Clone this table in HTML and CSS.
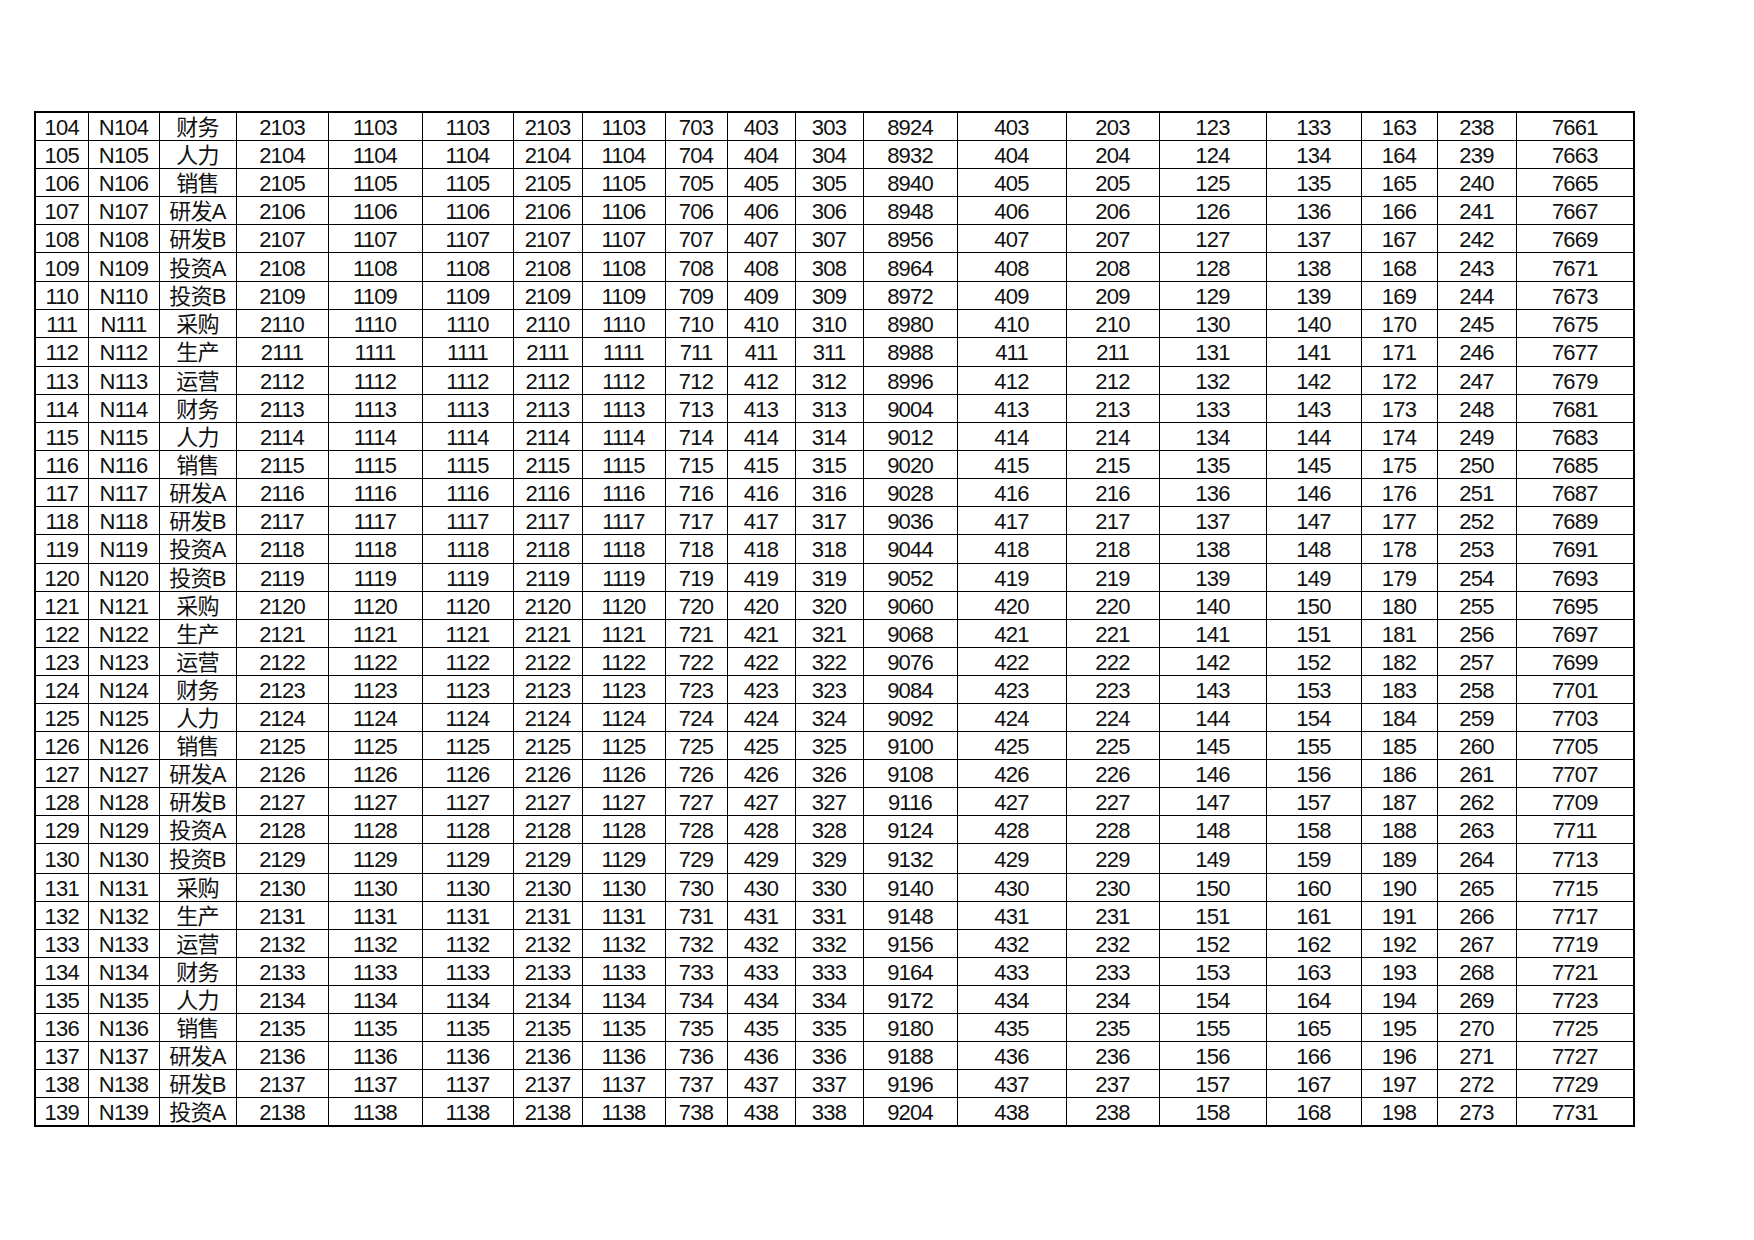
FILE: index.html
```html
<!DOCTYPE html>
<html lang="zh">
<head>
<meta charset="utf-8">
<title>表格</title>
<link rel="stylesheet" href="styles.css">
</head>
<body>
<div class="page">
<table class="grid">
<colgroup>
<col class="c1"><col class="c2"><col class="c3"><col class="c4"><col class="c5"><col class="c6"><col class="c7"><col class="c8"><col class="c9"><col class="c10"><col class="c11"><col class="c12"><col class="c13"><col class="c14"><col class="c15"><col class="c16"><col class="c17"><col class="c18"><col class="c19">
</colgroup>
<tbody>
<tr><td>104</td><td>N104</td><td>财务</td><td>2103</td><td>1103</td><td>1103</td><td>2103</td><td>1103</td><td>703</td><td>403</td><td>303</td><td>8924</td><td>403</td><td>203</td><td>123</td><td>133</td><td>163</td><td>238</td><td>7661</td></tr>
<tr><td>105</td><td>N105</td><td>人力</td><td>2104</td><td>1104</td><td>1104</td><td>2104</td><td>1104</td><td>704</td><td>404</td><td>304</td><td>8932</td><td>404</td><td>204</td><td>124</td><td>134</td><td>164</td><td>239</td><td>7663</td></tr>
<tr><td>106</td><td>N106</td><td>销售</td><td>2105</td><td>1105</td><td>1105</td><td>2105</td><td>1105</td><td>705</td><td>405</td><td>305</td><td>8940</td><td>405</td><td>205</td><td>125</td><td>135</td><td>165</td><td>240</td><td>7665</td></tr>
<tr><td>107</td><td>N107</td><td>研发A</td><td>2106</td><td>1106</td><td>1106</td><td>2106</td><td>1106</td><td>706</td><td>406</td><td>306</td><td>8948</td><td>406</td><td>206</td><td>126</td><td>136</td><td>166</td><td>241</td><td>7667</td></tr>
<tr><td>108</td><td>N108</td><td>研发B</td><td>2107</td><td>1107</td><td>1107</td><td>2107</td><td>1107</td><td>707</td><td>407</td><td>307</td><td>8956</td><td>407</td><td>207</td><td>127</td><td>137</td><td>167</td><td>242</td><td>7669</td></tr>
<tr><td>109</td><td>N109</td><td>投资A</td><td>2108</td><td>1108</td><td>1108</td><td>2108</td><td>1108</td><td>708</td><td>408</td><td>308</td><td>8964</td><td>408</td><td>208</td><td>128</td><td>138</td><td>168</td><td>243</td><td>7671</td></tr>
<tr><td>110</td><td>N110</td><td>投资B</td><td>2109</td><td>1109</td><td>1109</td><td>2109</td><td>1109</td><td>709</td><td>409</td><td>309</td><td>8972</td><td>409</td><td>209</td><td>129</td><td>139</td><td>169</td><td>244</td><td>7673</td></tr>
<tr><td>111</td><td>N111</td><td>采购</td><td>2110</td><td>1110</td><td>1110</td><td>2110</td><td>1110</td><td>710</td><td>410</td><td>310</td><td>8980</td><td>410</td><td>210</td><td>130</td><td>140</td><td>170</td><td>245</td><td>7675</td></tr>
<tr><td>112</td><td>N112</td><td>生产</td><td>2111</td><td>1111</td><td>1111</td><td>2111</td><td>1111</td><td>711</td><td>411</td><td>311</td><td>8988</td><td>411</td><td>211</td><td>131</td><td>141</td><td>171</td><td>246</td><td>7677</td></tr>
<tr><td>113</td><td>N113</td><td>运营</td><td>2112</td><td>1112</td><td>1112</td><td>2112</td><td>1112</td><td>712</td><td>412</td><td>312</td><td>8996</td><td>412</td><td>212</td><td>132</td><td>142</td><td>172</td><td>247</td><td>7679</td></tr>
<tr><td>114</td><td>N114</td><td>财务</td><td>2113</td><td>1113</td><td>1113</td><td>2113</td><td>1113</td><td>713</td><td>413</td><td>313</td><td>9004</td><td>413</td><td>213</td><td>133</td><td>143</td><td>173</td><td>248</td><td>7681</td></tr>
<tr><td>115</td><td>N115</td><td>人力</td><td>2114</td><td>1114</td><td>1114</td><td>2114</td><td>1114</td><td>714</td><td>414</td><td>314</td><td>9012</td><td>414</td><td>214</td><td>134</td><td>144</td><td>174</td><td>249</td><td>7683</td></tr>
<tr><td>116</td><td>N116</td><td>销售</td><td>2115</td><td>1115</td><td>1115</td><td>2115</td><td>1115</td><td>715</td><td>415</td><td>315</td><td>9020</td><td>415</td><td>215</td><td>135</td><td>145</td><td>175</td><td>250</td><td>7685</td></tr>
<tr><td>117</td><td>N117</td><td>研发A</td><td>2116</td><td>1116</td><td>1116</td><td>2116</td><td>1116</td><td>716</td><td>416</td><td>316</td><td>9028</td><td>416</td><td>216</td><td>136</td><td>146</td><td>176</td><td>251</td><td>7687</td></tr>
<tr><td>118</td><td>N118</td><td>研发B</td><td>2117</td><td>1117</td><td>1117</td><td>2117</td><td>1117</td><td>717</td><td>417</td><td>317</td><td>9036</td><td>417</td><td>217</td><td>137</td><td>147</td><td>177</td><td>252</td><td>7689</td></tr>
<tr><td>119</td><td>N119</td><td>投资A</td><td>2118</td><td>1118</td><td>1118</td><td>2118</td><td>1118</td><td>718</td><td>418</td><td>318</td><td>9044</td><td>418</td><td>218</td><td>138</td><td>148</td><td>178</td><td>253</td><td>7691</td></tr>
<tr><td>120</td><td>N120</td><td>投资B</td><td>2119</td><td>1119</td><td>1119</td><td>2119</td><td>1119</td><td>719</td><td>419</td><td>319</td><td>9052</td><td>419</td><td>219</td><td>139</td><td>149</td><td>179</td><td>254</td><td>7693</td></tr>
<tr><td>121</td><td>N121</td><td>采购</td><td>2120</td><td>1120</td><td>1120</td><td>2120</td><td>1120</td><td>720</td><td>420</td><td>320</td><td>9060</td><td>420</td><td>220</td><td>140</td><td>150</td><td>180</td><td>255</td><td>7695</td></tr>
<tr><td>122</td><td>N122</td><td>生产</td><td>2121</td><td>1121</td><td>1121</td><td>2121</td><td>1121</td><td>721</td><td>421</td><td>321</td><td>9068</td><td>421</td><td>221</td><td>141</td><td>151</td><td>181</td><td>256</td><td>7697</td></tr>
<tr><td>123</td><td>N123</td><td>运营</td><td>2122</td><td>1122</td><td>1122</td><td>2122</td><td>1122</td><td>722</td><td>422</td><td>322</td><td>9076</td><td>422</td><td>222</td><td>142</td><td>152</td><td>182</td><td>257</td><td>7699</td></tr>
<tr><td>124</td><td>N124</td><td>财务</td><td>2123</td><td>1123</td><td>1123</td><td>2123</td><td>1123</td><td>723</td><td>423</td><td>323</td><td>9084</td><td>423</td><td>223</td><td>143</td><td>153</td><td>183</td><td>258</td><td>7701</td></tr>
<tr><td>125</td><td>N125</td><td>人力</td><td>2124</td><td>1124</td><td>1124</td><td>2124</td><td>1124</td><td>724</td><td>424</td><td>324</td><td>9092</td><td>424</td><td>224</td><td>144</td><td>154</td><td>184</td><td>259</td><td>7703</td></tr>
<tr><td>126</td><td>N126</td><td>销售</td><td>2125</td><td>1125</td><td>1125</td><td>2125</td><td>1125</td><td>725</td><td>425</td><td>325</td><td>9100</td><td>425</td><td>225</td><td>145</td><td>155</td><td>185</td><td>260</td><td>7705</td></tr>
<tr><td>127</td><td>N127</td><td>研发A</td><td>2126</td><td>1126</td><td>1126</td><td>2126</td><td>1126</td><td>726</td><td>426</td><td>326</td><td>9108</td><td>426</td><td>226</td><td>146</td><td>156</td><td>186</td><td>261</td><td>7707</td></tr>
<tr><td>128</td><td>N128</td><td>研发B</td><td>2127</td><td>1127</td><td>1127</td><td>2127</td><td>1127</td><td>727</td><td>427</td><td>327</td><td>9116</td><td>427</td><td>227</td><td>147</td><td>157</td><td>187</td><td>262</td><td>7709</td></tr>
<tr><td>129</td><td>N129</td><td>投资A</td><td>2128</td><td>1128</td><td>1128</td><td>2128</td><td>1128</td><td>728</td><td>428</td><td>328</td><td>9124</td><td>428</td><td>228</td><td>148</td><td>158</td><td>188</td><td>263</td><td>7711</td></tr>
<tr><td>130</td><td>N130</td><td>投资B</td><td>2129</td><td>1129</td><td>1129</td><td>2129</td><td>1129</td><td>729</td><td>429</td><td>329</td><td>9132</td><td>429</td><td>229</td><td>149</td><td>159</td><td>189</td><td>264</td><td>7713</td></tr>
<tr><td>131</td><td>N131</td><td>采购</td><td>2130</td><td>1130</td><td>1130</td><td>2130</td><td>1130</td><td>730</td><td>430</td><td>330</td><td>9140</td><td>430</td><td>230</td><td>150</td><td>160</td><td>190</td><td>265</td><td>7715</td></tr>
<tr><td>132</td><td>N132</td><td>生产</td><td>2131</td><td>1131</td><td>1131</td><td>2131</td><td>1131</td><td>731</td><td>431</td><td>331</td><td>9148</td><td>431</td><td>231</td><td>151</td><td>161</td><td>191</td><td>266</td><td>7717</td></tr>
<tr><td>133</td><td>N133</td><td>运营</td><td>2132</td><td>1132</td><td>1132</td><td>2132</td><td>1132</td><td>732</td><td>432</td><td>332</td><td>9156</td><td>432</td><td>232</td><td>152</td><td>162</td><td>192</td><td>267</td><td>7719</td></tr>
<tr><td>134</td><td>N134</td><td>财务</td><td>2133</td><td>1133</td><td>1133</td><td>2133</td><td>1133</td><td>733</td><td>433</td><td>333</td><td>9164</td><td>433</td><td>233</td><td>153</td><td>163</td><td>193</td><td>268</td><td>7721</td></tr>
<tr><td>135</td><td>N135</td><td>人力</td><td>2134</td><td>1134</td><td>1134</td><td>2134</td><td>1134</td><td>734</td><td>434</td><td>334</td><td>9172</td><td>434</td><td>234</td><td>154</td><td>164</td><td>194</td><td>269</td><td>7723</td></tr>
<tr><td>136</td><td>N136</td><td>销售</td><td>2135</td><td>1135</td><td>1135</td><td>2135</td><td>1135</td><td>735</td><td>435</td><td>335</td><td>9180</td><td>435</td><td>235</td><td>155</td><td>165</td><td>195</td><td>270</td><td>7725</td></tr>
<tr><td>137</td><td>N137</td><td>研发A</td><td>2136</td><td>1136</td><td>1136</td><td>2136</td><td>1136</td><td>736</td><td>436</td><td>336</td><td>9188</td><td>436</td><td>236</td><td>156</td><td>166</td><td>196</td><td>271</td><td>7727</td></tr>
<tr><td>138</td><td>N138</td><td>研发B</td><td>2137</td><td>1137</td><td>1137</td><td>2137</td><td>1137</td><td>737</td><td>437</td><td>337</td><td>9196</td><td>437</td><td>237</td><td>157</td><td>167</td><td>197</td><td>272</td><td>7729</td></tr>
<tr><td>139</td><td>N139</td><td>投资A</td><td>2138</td><td>1138</td><td>1138</td><td>2138</td><td>1138</td><td>738</td><td>438</td><td>338</td><td>9204</td><td>438</td><td>238</td><td>158</td><td>168</td><td>198</td><td>273</td><td>7731</td></tr>
</tbody>
</table>
</div>
</body>
</html>
```
FILE: styles.css
```css
html, body {
  margin: 0;
  padding: 0;
  background: #ffffff;
}

.page {
  padding: 111px 0 0 34px;
}

.grid {
  border-collapse: collapse;
  table-layout: fixed;
  width: 1600px;
  border: 2px solid #000;
  font-family: "Liberation Sans", "Noto Sans CJK SC", sans-serif;
  font-size: 22px;
  letter-spacing: -0.8px;
  color: #111;
}

.grid td {
  border: 1px solid #000;
  padding: 2px 0 0 0;
  height: 25.1px;
  line-height: 25px;
  text-align: center;
  white-space: nowrap;
  overflow: hidden;
}

.grid tr:nth-child(18n+9) td {
  height: 26.1px;
}

.c1 { width: 53px; }
.c2 { width: 71px; }
.c3 { width: 77px; }
.c4 { width: 92px; }
.c5 { width: 94px; }
.c6 { width: 91px; }
.c7 { width: 69px; }
.c8 { width: 83px; }
.c9 { width: 62px; }
.c10 { width: 68px; }
.c11 { width: 68px; }
.c12 { width: 94px; }
.c13 { width: 109px; }
.c14 { width: 93px; }
.c15 { width: 107px; }
.c16 { width: 95px; }
.c17 { width: 76px; }
.c18 { width: 79px; }
.c19 { width: 118px; }
```
